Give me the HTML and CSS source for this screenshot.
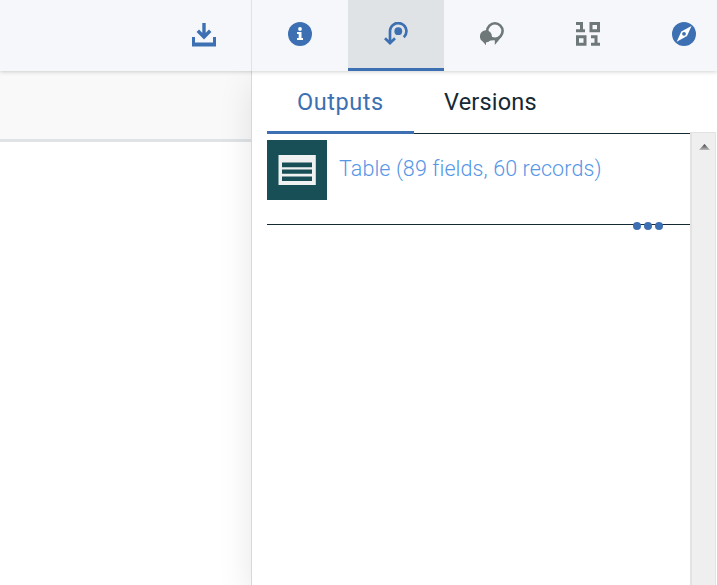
FILE: index.html
```
<!DOCTYPE html>
<html lang="en">
<head>
<meta charset="utf-8">
<title>Outputs</title>
<link rel="stylesheet" href="styles.css">
</head>
<body>
<header class="header">
  <div class="actions">
    <svg class="icon icon-download" viewBox="0 0 24 25"><path fill="none" stroke="currentColor" stroke-width="3.4" d="M12 1v14M5.8 8.8L12 15l6.2-6.2"/><path fill="currentColor" d="M0 15h3v5.5h18V15h3v9.6H0z"/></svg>
  </div>
  <nav class="tools">
    <button class="tool" aria-label="Information">
      <svg class="icon" viewBox="0 0 24 24"><circle cx="12" cy="12" r="12" fill="currentColor"/><circle cx="12" cy="7" r="1.9" fill="#fff"/><path fill="#fff" d="M9 10h4.5v6H15v2H9v-2h1.7v-4H9z"/></svg>
    </button>
    <button class="tool tool-active" aria-label="Outputs and versions">
      <svg class="icon" viewBox="0 0 24 24"><circle cx="14.3" cy="9.2" r="3.9" fill="currentColor"/><path fill="none" stroke="currentColor" stroke-width="2.7" d="M6 20.5V9.5a8.2 8.2 0 1 1 13.8 5.8M1 16.3l5 4.8 5-4.8"/></svg>
    </button>
    <button class="tool tool-muted" aria-label="Comments">
      <svg class="icon" viewBox="0 0 24 24"><circle cx="14.9" cy="9" r="7.7" fill="none" stroke="currentColor" stroke-width="2.6"/><circle cx="5.9" cy="14.3" r="6" fill="currentColor"/><path fill="currentColor" d="M.8 17.3h10L8 20l-2 .2v3zM10 15l3 1.3 5 .2 4.8-3.3-8 9.8v-4.8l-5 .3z"/></svg>
    </button>
    <button class="tool tool-muted" aria-label="Data">
      <svg class="icon" viewBox="0 0 24 24"><path fill="none" stroke="currentColor" stroke-width="3" d="M0 1.5h5.5V9M0 8.7h9M15 1.5h7.5v7.2H15zM1.5 14.8H9v7.5H1.5zM15 14.8h5v6.7M15 22.3h9"/></svg>
    </button>
    <button class="tool" aria-label="Explore">
      <svg class="icon" viewBox="0 0 24 24"><circle cx="12" cy="12" r="12" fill="currentColor"/><path fill="#fff" d="M19.5 4L15 14l-10.3 5.7L9.3 9.5z"/><circle cx="12" cy="11.8" r="1.9" fill="currentColor"/></svg>
    </button>
  </nav>
</header>
<main class="workspace">
  <section class="canvas"><div class="toolbar"></div></section>
  <aside class="panel">
    <div class="tabs">
      <div class="tab tab-active"><span class="label-outputs">Outputs</span></div>
      <div class="tab"><span class="label-versions">Versions</span></div>
    </div>
    <div class="scroll-area">
      <div class="output">
        <svg class="thumb" viewBox="0 0 60 60"><path fill="#184f57" d="M0 0h60v60H0z"/><path fill="#f0f2f2" d="M11.5 15h37.3v30H11.5z"/><path fill="#184f57" d="M15 22.5h30v4.7H15zM15 29.5h30v4.3H15zM15 36.4h30V41H15z"/></svg>
        <a class="output-name">Table (89 fields, 60 records)</a>
        <span class="more"><i class="dot"></i><i class="dot"></i><i class="dot"></i></span>
      </div>
      <div class="scrollbar"><svg class="arrow" viewBox="0 0 11 6"><defs><linearGradient id="arrow-fill" x2="0" y2="1"><stop stop-color="#404040"/><stop offset="1" stop-color="#bcbcbc"/></linearGradient></defs><path fill="url(#arrow-fill)" d="M5.5 0L11 6H0z"/></svg></div>
    </div>
  </aside>
</main>
</body>
</html>
```
FILE: styles.css
```
* { box-sizing: border-box; }
body {
  margin: 0;
  height: 100vh;
  overflow: hidden;
  display: flex;
  flex-direction: column;
  background: #fff;
  font-family: Roboto, "Liberation Sans", sans-serif;
}
.header {
  position: relative;
  z-index: 1;
  flex: none;
  display: flex;
  height: 71px;
  background: #f5f7fb;
  color: #3d70b2;
  box-shadow: 0 1px 4px rgba(0, 0, 0, .18);
}
.actions {
  flex: none;
  width: 252px;
  border-right: 1px solid #dfe3e6;
  display: flex;
  justify-content: flex-end;
  padding: 22px 35px 0 0;
}
.tools { display: flex; flex: 1; overflow: hidden; }
.tool {
  flex: none;
  width: 96px;
  height: 71px;
  padding: 22px 0 0;
  border: 0;
  border-bottom: 3px solid transparent;
  background: none;
  color: #3d70b2;
  display: flex;
  justify-content: center;
  align-items: flex-start;
}
.tool-active { background: #dfe3e6; border-bottom-color: #3d70b2; }
.tool-muted { color: #6f7878; }
.icon { display: block; width: 24px; height: 24px; }
.icon-download { height: 25px; }
.workspace { flex: 1; display: flex; min-height: 0; }
.canvas { flex: none; width: 251px; }
.toolbar { height: 71px; background: #f9f9f9; border-bottom: 3px solid #dfe3e6; }
.panel {
  position: relative;
  flex: 1;
  min-width: 0;
  display: flex;
  flex-direction: column;
  background: #fff;
  border-left: 1px solid #d6d9db;
  box-shadow: 0 12px 32px rgba(0, 0, 0, .1);
}
.tabs {
  flex: none;
  display: flex;
  width: 423px;
  height: 63px;
  margin-left: 15px;
  border-bottom: 1px solid #152934;
}
.tab {
  height: 63px;
  padding: 17px 30px 0;
  color: #152934;
  font-size: 23.5px;
  line-height: 28px;
  white-space: nowrap;
}
.tab-active { width: 147px; color: #3d70b2; border-bottom: 3px solid #3d70b2; }
.label-outputs { letter-spacing: .55px; }
.label-versions { letter-spacing: .2px; }
.scroll-area { flex: 1; display: flex; margin-top: -2px; min-height: 0; }
.output {
  position: relative;
  display: flex;
  width: 423px;
  height: 85px;
  margin: 8px 0 0 15px;
  border-bottom: 1px solid #152934;
}
.thumb { flex: none; width: 60px; height: 60px; }
.output-name {
  margin-left: 12px;
  padding-top: 15px;
  color: #5596e6;
  font-size: 21.5px;
  font-weight: 300;
  letter-spacing: .1px;
  line-height: 28px;
  white-space: nowrap;
}
.more {
  position: absolute;
  right: 27px;
  bottom: -6px;
  display: flex;
  gap: 3px;
}
.dot { width: 8px; height: 8px; border-radius: 50%; background: #3d70b2; }
.scrollbar {
  width: 26px;
  padding: 11px 0 0 7px;
  background: #efefef;
  border: solid #e3e3e3;
  border-width: 1px 1px 0 2px;
}
.arrow { display: block; width: 11px; height: 6px; }
```
